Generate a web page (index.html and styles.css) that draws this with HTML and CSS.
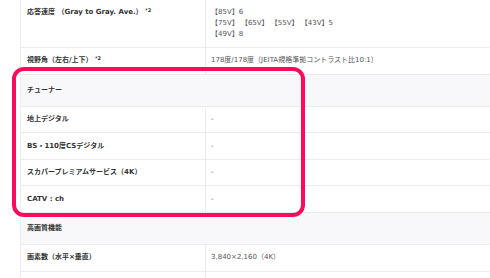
FILE: index.html
```html
<!DOCTYPE html>
<html lang="ja">
<head>
<meta charset="utf-8">
<link rel="stylesheet" href="styles.css">
</head>
<body>
<div class="wrap">
  <div class="spec">
    <div class="label">応答速度 （Gray to Gray. Ave.） <sup class="note">*2</sup></div>
    <div class="value">【85V】6<br>【75V】 【65V】 【55V】 【43V】5<br>【49V】8</div>

    <div class="label">視野角（左右/上下） <sup class="note">*2</sup></div>
    <div class="value">178度/178度（JEITA規格準拠コントラスト比10:1）</div>

    <div class="group">チューナー</div>

    <div class="label">地上デジタル</div>
    <div class="value">-</div>

    <div class="label">BS・110度CSデジタル</div>
    <div class="value">-</div>

    <div class="label">スカパープレミアムサービス（4K）</div>
    <div class="value">-</div>

    <div class="label">CATV : ch</div>
    <div class="value">-</div>

    <div class="group">高画質機能</div>

    <div class="label">画素数（水平×垂直）</div>
    <div class="value">3,840×2,160（4K）</div>

    <div class="label">&nbsp;</div>
    <div class="value">&nbsp;</div>
  </div>
  <div class="highlight"></div>
</div>
</body>
</html>
```

FILE: styles.css
```css
html, body {
  margin: 0;
  padding: 0;
  background: #ffffff;
  overflow: hidden;
}

body {
  font-family: "DejaVu Sans", "Noto Sans CJK JP", sans-serif;
  font-size: 7px;
  line-height: 11px;
  color: #333333;
}

.wrap {
  position: relative;
  padding-left: 20px;
  height: 278px;
  overflow: hidden;
}

.spec {
  display: grid;
  grid-template-columns: 185px 335px;
  width: 520px;
  margin-top: -0.3px;
}

.label,
.value,
.group {
  padding: 7.25px 6px;
  border-bottom: 1px solid #ececec;
  border-left: 1px solid #ececec;
  white-space: nowrap;
}

.label {
  font-weight: bold;
  color: #333333;
}

.value {
  font-weight: normal;
  color: #555555;
  padding-left: 5px;
}

.group {
  grid-column: 1 / -1;
  background: #f8f8fa;
  font-weight: bold;
  color: #333333;
  padding-top: 10.1px;
  padding-bottom: 10.1px;
}

.note {
  font-size: 5px;
  line-height: 0;
  vertical-align: 2.5px;
  font-weight: bold;
}

.highlight {
  position: absolute;
  left: 12px;
  top: 67px;
  width: 293px;
  height: 150px;
  box-sizing: border-box;
  border: 4.5px solid #fa0c5a;
  border-radius: 12px;
  pointer-events: none;
}
```
